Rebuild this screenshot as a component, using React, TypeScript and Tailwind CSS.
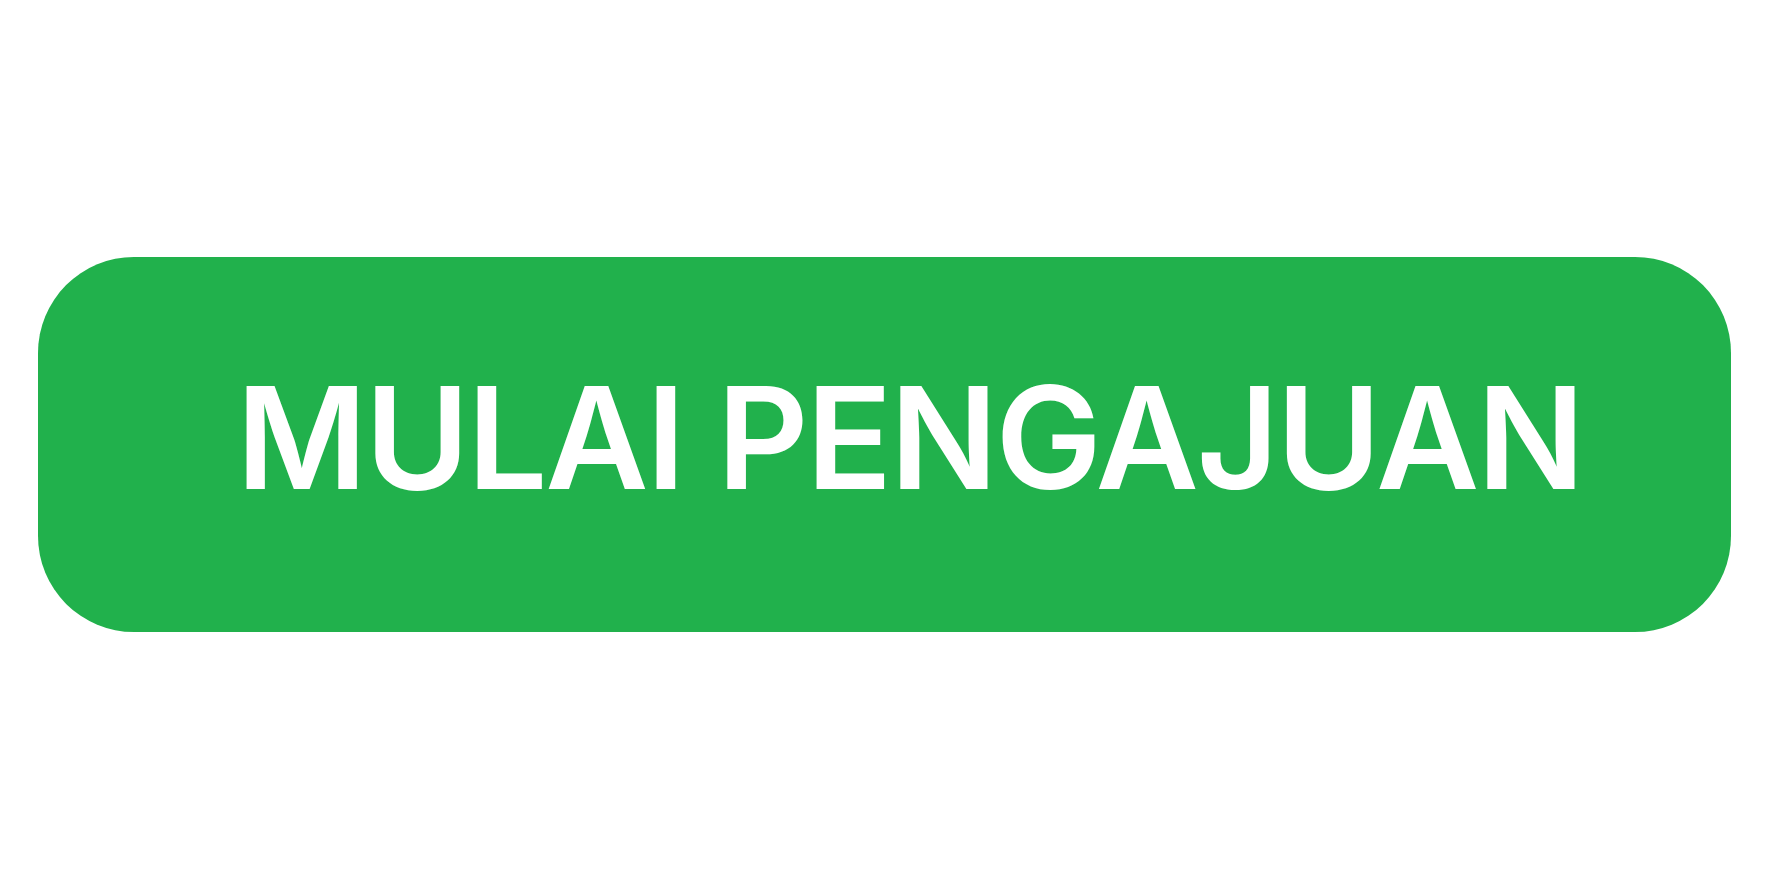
export default function App() {
  return (
    <div className="w-[1770px] h-[889px] bg-white pt-[257px] pl-[38px]">
      <button
        className="w-[1693px] h-[375px] rounded-[96px] bg-[#21b14c] flex items-center justify-center pl-[50px] pb-[16px] text-white text-[142px] font-semibold tracking-[-0.016em] leading-none"
        style={{ fontFamily: "Inter, 'Liberation Sans', sans-serif" }}
      >
        MULAI PENGAJUAN
      </button>
    </div>
  );
}
